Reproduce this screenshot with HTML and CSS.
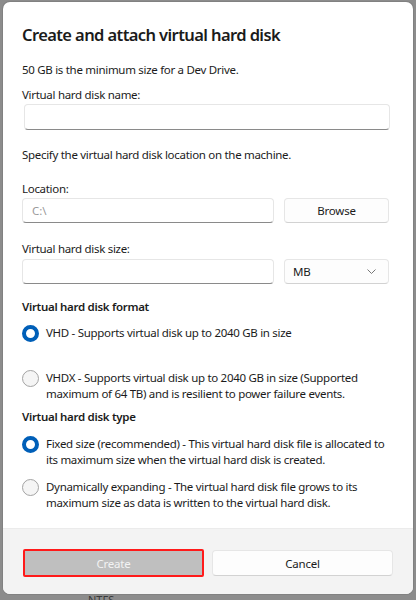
FILE: index.html
```html
<!DOCTYPE html>
<html lang="en">
<head>
<meta charset="UTF-8" />
<meta name="viewport" content="width=device-width, initial-scale=1" />
<title>Create and attach virtual hard disk</title>
<link rel="stylesheet" href="styles.css">
</head>
<body>
  <span class="behind-text">NTFS</span>

  <div class="dialog" role="dialog" aria-label="Create and attach virtual hard disk">
    <div class="content">
      <h1 class="title">Create and attach virtual hard disk</h1>

      <p class="note">50 GB is the minimum size for a Dev Drive.</p>

      <label class="label label-name" for="vhdName">Virtual hard disk name:</label>
      <input id="vhdName" class="field field-name" type="text" />

      <p class="note note-location">Specify the virtual hard disk location on the machine.</p>

      <label class="label" for="location">Location:</label>
      <div class="row">
        <input id="location" class="field" type="text" placeholder="C:\" />
        <button class="btn side-btn">Browse</button>
      </div>

      <label class="label label-size" for="size">Virtual hard disk size:</label>
      <div class="row row-size">
        <input id="size" class="field" type="text" />
        <div class="btn side-btn select">
          <span>MB</span>
          <svg width="9" height="5" viewBox="0 0 9 5"><path d="M0.5 0.5l4 4 4-4" fill="none" stroke="#777" stroke-width="1"/></svg>
        </div>
      </div>

      <h2 class="group-title">Virtual hard disk format</h2>
      <div class="radios radios-format">
        <label class="radio">
          <span class="dot checked"></span>
          <span class="radio-text">VHD - Supports virtual disk up to 2040 GB in size</span>
        </label>
        <label class="radio">
          <span class="dot"></span>
          <span class="radio-text">VHDX - Supports virtual disk up to 2040 GB in size (Supported maximum of 64 TB) and is resilient to power failure events.</span>
        </label>
      </div>

      <h2 class="group-title group-type">Virtual hard disk type</h2>
      <div class="radios">
        <label class="radio">
          <span class="dot checked"></span>
          <span class="radio-text">Fixed size (recommended) - This virtual hard disk file is allocated to its maximum size when the virtual hard disk is created.</span>
        </label>
        <label class="radio">
          <span class="dot"></span>
          <span class="radio-text">Dynamically expanding - The virtual hard disk file grows to its maximum size as data is written to the virtual hard disk.</span>
        </label>
      </div>
    </div>

    <div class="footer">
      <button class="btn footer-btn create" disabled>Create</button>
      <button class="btn footer-btn">Cancel</button>
    </div>
  </div>
</body>
</html>
```

FILE: styles.css
```css
* {
  box-sizing: border-box;
  margin: 0;
  padding: 0;
}

body {
  background: #8c8c8c;
  font-family: 'Noto Sans', 'Open Sans', sans-serif;
  color: #1b1b1b;
  width: 416px;
  height: 600px;
  overflow: hidden;
  position: relative;
}

.behind-text {
  position: absolute;
  left: 88px;
  top: 594px;
  font-size: 11px;
  line-height: 12px;
  color: #3a3a3a;
}

.dialog {
  position: absolute;
  left: 3px;
  top: 2px;
  width: 410px;
  height: 592px;
  background: #fff;
  border-radius: 7px;
  overflow: hidden;
  display: flex;
  flex-direction: column;
  box-shadow: 0 0 0 1px rgba(0,0,0,0.08);
}

.content {
  flex: 1;
  padding: 21px 19px 0 19px;
  display: flex;
  flex-direction: column;
}

.title {
  font-size: 16.5px;
  font-weight: 600;
  line-height: 24px;
  letter-spacing: -0.6px;
  margin-bottom: 15px;
}

.note,
.label,
.radio-text,
.group-title {
  font-size: 11.5px;
  line-height: 16px;
  letter-spacing: -0.3px;
}

.note {
  margin-bottom: 9px;
}

.note-location {
  margin-top: 17px;
  margin-bottom: 18px;
}

.label {
  margin-bottom: 1px;
}

.label-size {
  margin-top: 18px;
}

.field {
  height: 25px;
  border: 1px solid #e6e6e6;
  border-bottom-color: #8a8a8a;
  border-radius: 4px;
  background: #fff;
  font: inherit;
  font-size: 11.5px;
  padding: 0 9px;
  outline: none;
}

.field::placeholder {
  color: #9a9a9a;
}

.field-name {
  margin-left: 2px;
  width: 366px;
  height: 26px;
}

.row {
  display: flex;
  gap: 10px;
}

.row .field {
  width: 252px;
}

.row-size {
  margin-top: 1px;
}

.btn {
  font: inherit;
  font-size: 11.5px;
  letter-spacing: -0.2px;
  color: #1b1b1b;
  background: #fdfdfd;
  border: 1px solid #e6e6e6;
  border-bottom-color: #d2d2d2;
  border-radius: 4px;
  height: 25px;
  cursor: pointer;
}

.side-btn {
  width: 105px;
}

.select {
  display: flex;
  align-items: center;
  justify-content: space-between;
  padding: 0 12px 0 8px;
}

.group-title {
  font-weight: 600;
  margin-top: 15px;
  margin-bottom: 10px;
}

.group-type {
  margin-top: 7px;
  margin-bottom: 11px;
}

.radios {
  display: flex;
  flex-direction: column;
  gap: 11px;
}

.radios-format {
  gap: 28px;
}

.radio {
  display: flex;
  gap: 7px;
  align-items: flex-start;
  padding-right: 4px;
}

.dot {
  flex: none;
  width: 17px;
  height: 17px;
  border-radius: 50%;
  border: 1px solid #a3a3a3;
  background: #f5f5f5;
}

.dot.checked {
  border: 4.5px solid #005fb8;
  background: #fff;
}

.footer {
  height: 66px;
  background: #f3f3f3;
  border-top: 1px solid #ebebeb;
  display: flex;
  gap: 8px;
  padding: 20px 20px 0 20px;
}

.footer-btn {
  width: 181px;
  height: 26px;
  margin-top: 1px;
}

.create {
  background: #bfbfbf;
  color: #f3f3f3;
  border: 2px solid #ff1a1a;
  border-radius: 2px;
  height: 28px;
  margin-top: 0;
  cursor: default;
}
```
